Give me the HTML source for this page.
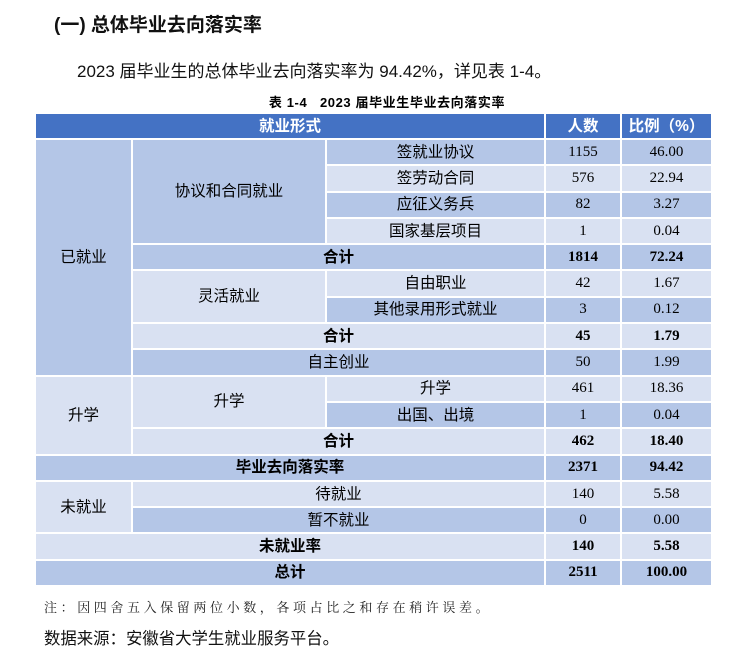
<!DOCTYPE html>
<html><head><meta charset="utf-8"><style>
body{margin:0;width:744px;height:655px;background:#fff;font-family:"Liberation Sans","Noto Sans CJK SC",sans-serif;color:#000;position:relative;overflow:hidden}
.h{position:absolute;left:54px;top:10px;font-size:19px;font-weight:bold;color:#111}
.p{position:absolute;left:77px;top:57px;font-size:17px;color:#111}
.cap{position:absolute;left:0;width:774px;text-align:center;top:92px;font-size:13px;font-weight:bold;letter-spacing:0.6px}
table{position:absolute;left:34px;top:112px;border-collapse:collapse;width:677px;table-layout:fixed}
td{border:2px solid #fff;text-align:center;padding:0;height:24.3px;font-size:15.5px;line-height:15px}
.d{background:#B4C6E7}.l{background:#D9E1F2}
.hd td{background:#4472C4;color:#fff;font-weight:bold;height:24px}
.n{font-family:"Liberation Serif","Noto Serif CJK SC",serif;font-size:15px}
.b{font-weight:bold}
.note{position:absolute;left:44px;top:597px;font-size:13px;color:#222;letter-spacing:3.6px;font-family:"Noto Serif CJK SC",serif}
.src{position:absolute;left:44px;top:625px;font-size:16.4px;color:#111}
</style></head><body>
<div class="h">(一) 总体毕业去向落实率</div>
<div class="p">2023 届毕业生的总体毕业去向落实率为 94.42%，详见表 1-4。</div>
<div class="cap">表 1-4&nbsp;&nbsp;&nbsp;2023 届毕业生毕业去向落实率</div>
<table>
<colgroup><col style="width:97px"><col style="width:194px"><col style="width:219px"><col style="width:76px"><col style="width:91px"></colgroup>
<tr class="hd"><td colspan="3">就业形式</td><td>人数</td><td>比例（%）</td></tr>
<tr class="d"><td rowspan="9" class="d">已就业</td><td rowspan="4" class="d">协议和合同就业</td><td>签就业协议</td><td class="n">1155</td><td class="n">46.00</td></tr>
<tr class="l"><td>签劳动合同</td><td class="n">576</td><td class="n">22.94</td></tr>
<tr class="d"><td>应征义务兵</td><td class="n">82</td><td class="n">3.27</td></tr>
<tr class="l"><td>国家基层项目</td><td class="n">1</td><td class="n">0.04</td></tr>
<tr class="d b"><td colspan="2">合计</td><td class="n b">1814</td><td class="n b">72.24</td></tr>
<tr class="l"><td rowspan="2" class="l">灵活就业</td><td>自由职业</td><td class="n">42</td><td class="n">1.67</td></tr>
<tr class="d"><td>其他录用形式就业</td><td class="n">3</td><td class="n">0.12</td></tr>
<tr class="l b"><td colspan="2">合计</td><td class="n b">45</td><td class="n b">1.79</td></tr>
<tr class="d"><td colspan="2">自主创业</td><td class="n">50</td><td class="n">1.99</td></tr>
<tr class="l"><td rowspan="3" class="l">升学</td><td rowspan="2" class="l">升学</td><td>升学</td><td class="n">461</td><td class="n">18.36</td></tr>
<tr class="d"><td>出国、出境</td><td class="n">1</td><td class="n">0.04</td></tr>
<tr class="l b"><td colspan="2">合计</td><td class="n b">462</td><td class="n b">18.40</td></tr>
<tr class="d b"><td colspan="3">毕业去向落实率</td><td class="n b">2371</td><td class="n b">94.42</td></tr>
<tr class="l"><td rowspan="2" class="l">未就业</td><td colspan="2">待就业</td><td class="n">140</td><td class="n">5.58</td></tr>
<tr class="d"><td colspan="2">暂不就业</td><td class="n">0</td><td class="n">0.00</td></tr>
<tr class="l b"><td colspan="3">未就业率</td><td class="n b">140</td><td class="n b">5.58</td></tr>
<tr class="d b"><td colspan="3">总计</td><td class="n b">2511</td><td class="n b">100.00</td></tr>
</table>
<div class="note">注：因四舍五入保留两位小数，各项占比之和存在稍许误差。</div>
<div class="src">数据来源：安徽省大学生就业服务平台。</div>
</body></html>
